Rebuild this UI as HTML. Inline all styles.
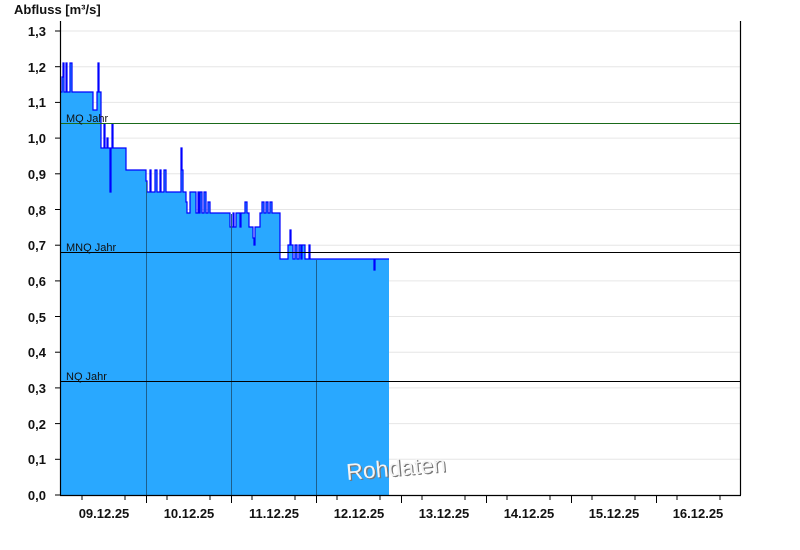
<!DOCTYPE html>
<html><head><meta charset="utf-8"><style>
html,body{margin:0;padding:0;background:#fff;}
svg{display:block;font-family:"Liberation Sans",Arial,sans-serif;}
</style></head><body>
<svg width="800" height="550" viewBox="0 0 800 550" xmlns="http://www.w3.org/2000/svg">
<text x="14" y="14" font-size="13" font-weight="bold" fill="#111">Abfluss [m³/s]</text>
<g stroke="#e6e6e6" stroke-width="1">
<line x1="61" x2="740" y1="31" y2="31"/><line x1="61" x2="740" y1="66.7" y2="66.7"/><line x1="61" x2="740" y1="102.4" y2="102.4"/><line x1="61" x2="740" y1="138.1" y2="138.1"/><line x1="61" x2="740" y1="173.8" y2="173.8"/><line x1="61" x2="740" y1="209.5" y2="209.5"/><line x1="61" x2="740" y1="245.2" y2="245.2"/><line x1="61" x2="740" y1="280.9" y2="280.9"/><line x1="61" x2="740" y1="316.5" y2="316.5"/><line x1="61" x2="740" y1="352.2" y2="352.2"/><line x1="61" x2="740" y1="387.9" y2="387.9"/><line x1="61" x2="740" y1="423.6" y2="423.6"/><line x1="61" x2="740" y1="459.3" y2="459.3"/>
</g>
<path d="M61,495 V92 H389 V495 Z M61,92 H62 V77 H63 V63 H64 V92 H66 V63 H67 V92 H70 V63 H72 V92 Z" fill="none"/>
<path d="M61,495 V92 H62 V77 H63 V63 H64 V92 H66 V63 H67 V92 H70 V63 H72 V92 H93 V110 H97 V92 H98 V63 H99 V92 H101 V148 H104 V124 H105 V148 H107 V138 H108 V148 H110 V192 H111 V148 H112 V124 H113 V148 H126 V170 H146 V181 H147 V192 H150 V170 H151 V192 H155 V170 H157 V192 H160 V170 H161 V192 H164 V170 H166 V192 H181 V148 H182 V170 H183 V192 H186 V202 H187 V213 H190 V192 H196 V213 H198 V192 H199 V213 H200 V192 H202 V213 H204 V192 H206 V213 H208 V202 H210 V213 H230 V227 H233 V213 H234 V227 H236 V213 H240 V227 H241 V213 H245 V202 H247 V213 H249 V227 H253 V238 H254 V245 H255 V227 H260 V213 H262 V202 H264 V213 H266 V202 H268 V213 H270 V202 H272 V213 H280 V259 H288 V245 H290 V230 H291 V245 H293 V259 H295 V245 H297 V259 H299 V245 H301 V259 H302 V245 H305 V259 H309 V245 H310 V259 H374 V270 H375 V259 H389 V495 Z" fill="#29a8ff"/>
<path d="M61,92 H62 V77 H63 V63 H64 V92 H66 V63 H67 V92 H70 V63 H72 V92 H93 V110 H97 V92 H98 V63 H99 V92 H101 V148 H104 V124 H105 V148 H107 V138 H108 V148 H110 V192 H111 V148 H112 V124 H113 V148 H126 V170 H146 V181 H147 V192 H150 V170 H151 V192 H155 V170 H157 V192 H160 V170 H161 V192 H164 V170 H166 V192 H181 V148 H182 V170 H183 V192 H186 V202 H187 V213 H190 V192 H196 V213 H198 V192 H199 V213 H200 V192 H202 V213 H204 V192 H206 V213 H208 V202 H210 V213 H230 V227 H233 V213 H234 V227 H236 V213 H240 V227 H241 V213 H245 V202 H247 V213 H249 V227 H253 V238 H254 V245 H255 V227 H260 V213 H262 V202 H264 V213 H266 V202 H268 V213 H270 V202 H272 V213 H280 V259 H288 V245 H290 V230 H291 V245 H293 V259 H295 V245 H297 V259 H299 V245 H301 V259 H302 V245 H305 V259 H309 V245 H310 V259 H374 V270 H375 V259 H389" fill="none" stroke="#0000ff" stroke-width="1.2"/>
<g stroke="#1d5f8c" stroke-width="1">
<line x1="146.5" x2="146.5" y1="182" y2="495"/><line x1="231.5" x2="231.5" y1="214" y2="495"/><line x1="316.5" x2="316.5" y1="260" y2="495"/>
</g>
<line x1="61" x2="740" y1="123.5" y2="123.5" stroke="#1a6a1a" stroke-width="1"/>
<line x1="61" x2="740" y1="252.5" y2="252.5" stroke="#000" stroke-width="1"/>
<line x1="61" x2="740" y1="381.5" y2="381.5" stroke="#000" stroke-width="1"/>
<g font-size="11" fill="#111">
<text x="66" y="122">MQ Jahr</text><text x="66" y="251">MNQ Jahr</text><text x="66" y="380">NQ Jahr</text>
</g>
<text x="347" y="480" font-size="23" fill="#777" transform="rotate(-5 347 480)" dx="1.2" dy="1.2">Rohdaten</text>
<text x="347" y="480" font-size="23" fill="#f4f4f4" transform="rotate(-5 347 480)">Rohdaten</text>
<line x1="60.5" x2="60.5" y1="21" y2="495" stroke="#000" stroke-width="1.2"/>
<line x1="740.5" x2="740.5" y1="21" y2="495" stroke="#000" stroke-width="1.2"/>
<line x1="60" x2="741" y1="495.5" y2="495.5" stroke="#000" stroke-width="1.2"/>
<g stroke="#000" stroke-width="1">
<line x1="55" x2="61" y1="31" y2="31"/><line x1="55" x2="61" y1="66.7" y2="66.7"/><line x1="55" x2="61" y1="102.4" y2="102.4"/><line x1="55" x2="61" y1="138.1" y2="138.1"/><line x1="55" x2="61" y1="173.8" y2="173.8"/><line x1="55" x2="61" y1="209.5" y2="209.5"/><line x1="55" x2="61" y1="245.2" y2="245.2"/><line x1="55" x2="61" y1="280.9" y2="280.9"/><line x1="55" x2="61" y1="316.5" y2="316.5"/><line x1="55" x2="61" y1="352.2" y2="352.2"/><line x1="55" x2="61" y1="387.9" y2="387.9"/><line x1="55" x2="61" y1="423.6" y2="423.6"/><line x1="55" x2="61" y1="459.3" y2="459.3"/><line x1="55" x2="61" y1="495" y2="495"/>
<line x1="146.5" x2="146.5" y1="495" y2="503"/><line x1="231.5" x2="231.5" y1="495" y2="503"/><line x1="316.5" x2="316.5" y1="495" y2="503"/><line x1="401.5" x2="401.5" y1="495" y2="503"/><line x1="486.5" x2="486.5" y1="495" y2="503"/><line x1="571.5" x2="571.5" y1="495" y2="503"/><line x1="656.5" x2="656.5" y1="495" y2="503"/>
<line x1="82" x2="82" y1="495" y2="500"/><line x1="125" x2="125" y1="495" y2="500"/><line x1="167" x2="167" y1="495" y2="500"/><line x1="210" x2="210" y1="495" y2="500"/><line x1="252" x2="252" y1="495" y2="500"/><line x1="295" x2="295" y1="495" y2="500"/><line x1="337" x2="337" y1="495" y2="500"/><line x1="380" x2="380" y1="495" y2="500"/><line x1="422" x2="422" y1="495" y2="500"/><line x1="465" x2="465" y1="495" y2="500"/><line x1="507" x2="507" y1="495" y2="500"/><line x1="550" x2="550" y1="495" y2="500"/><line x1="592" x2="592" y1="495" y2="500"/><line x1="635" x2="635" y1="495" y2="500"/><line x1="677" x2="677" y1="495" y2="500"/><line x1="720" x2="720" y1="495" y2="500"/>
</g>
<g font-size="13" font-weight="bold" fill="#111" text-anchor="end">
<text x="46" y="36">1,3</text><text x="46" y="72">1,2</text><text x="46" y="107">1,1</text><text x="46" y="143">1,0</text><text x="46" y="179">0,9</text><text x="46" y="215">0,8</text><text x="46" y="250">0,7</text><text x="46" y="286">0,6</text><text x="46" y="322">0,5</text><text x="46" y="357">0,4</text><text x="46" y="393">0,3</text><text x="46" y="429">0,2</text><text x="46" y="464">0,1</text><text x="46" y="500">0,0</text>
</g>
<g font-size="13" font-weight="bold" fill="#111" text-anchor="middle">
<text x="104" y="518">09.12.25</text><text x="189" y="518">10.12.25</text><text x="274" y="518">11.12.25</text><text x="359" y="518">12.12.25</text><text x="444" y="518">13.12.25</text><text x="529" y="518">14.12.25</text><text x="614" y="518">15.12.25</text><text x="698" y="518">16.12.25</text>
</g>
</svg>
</body></html>
